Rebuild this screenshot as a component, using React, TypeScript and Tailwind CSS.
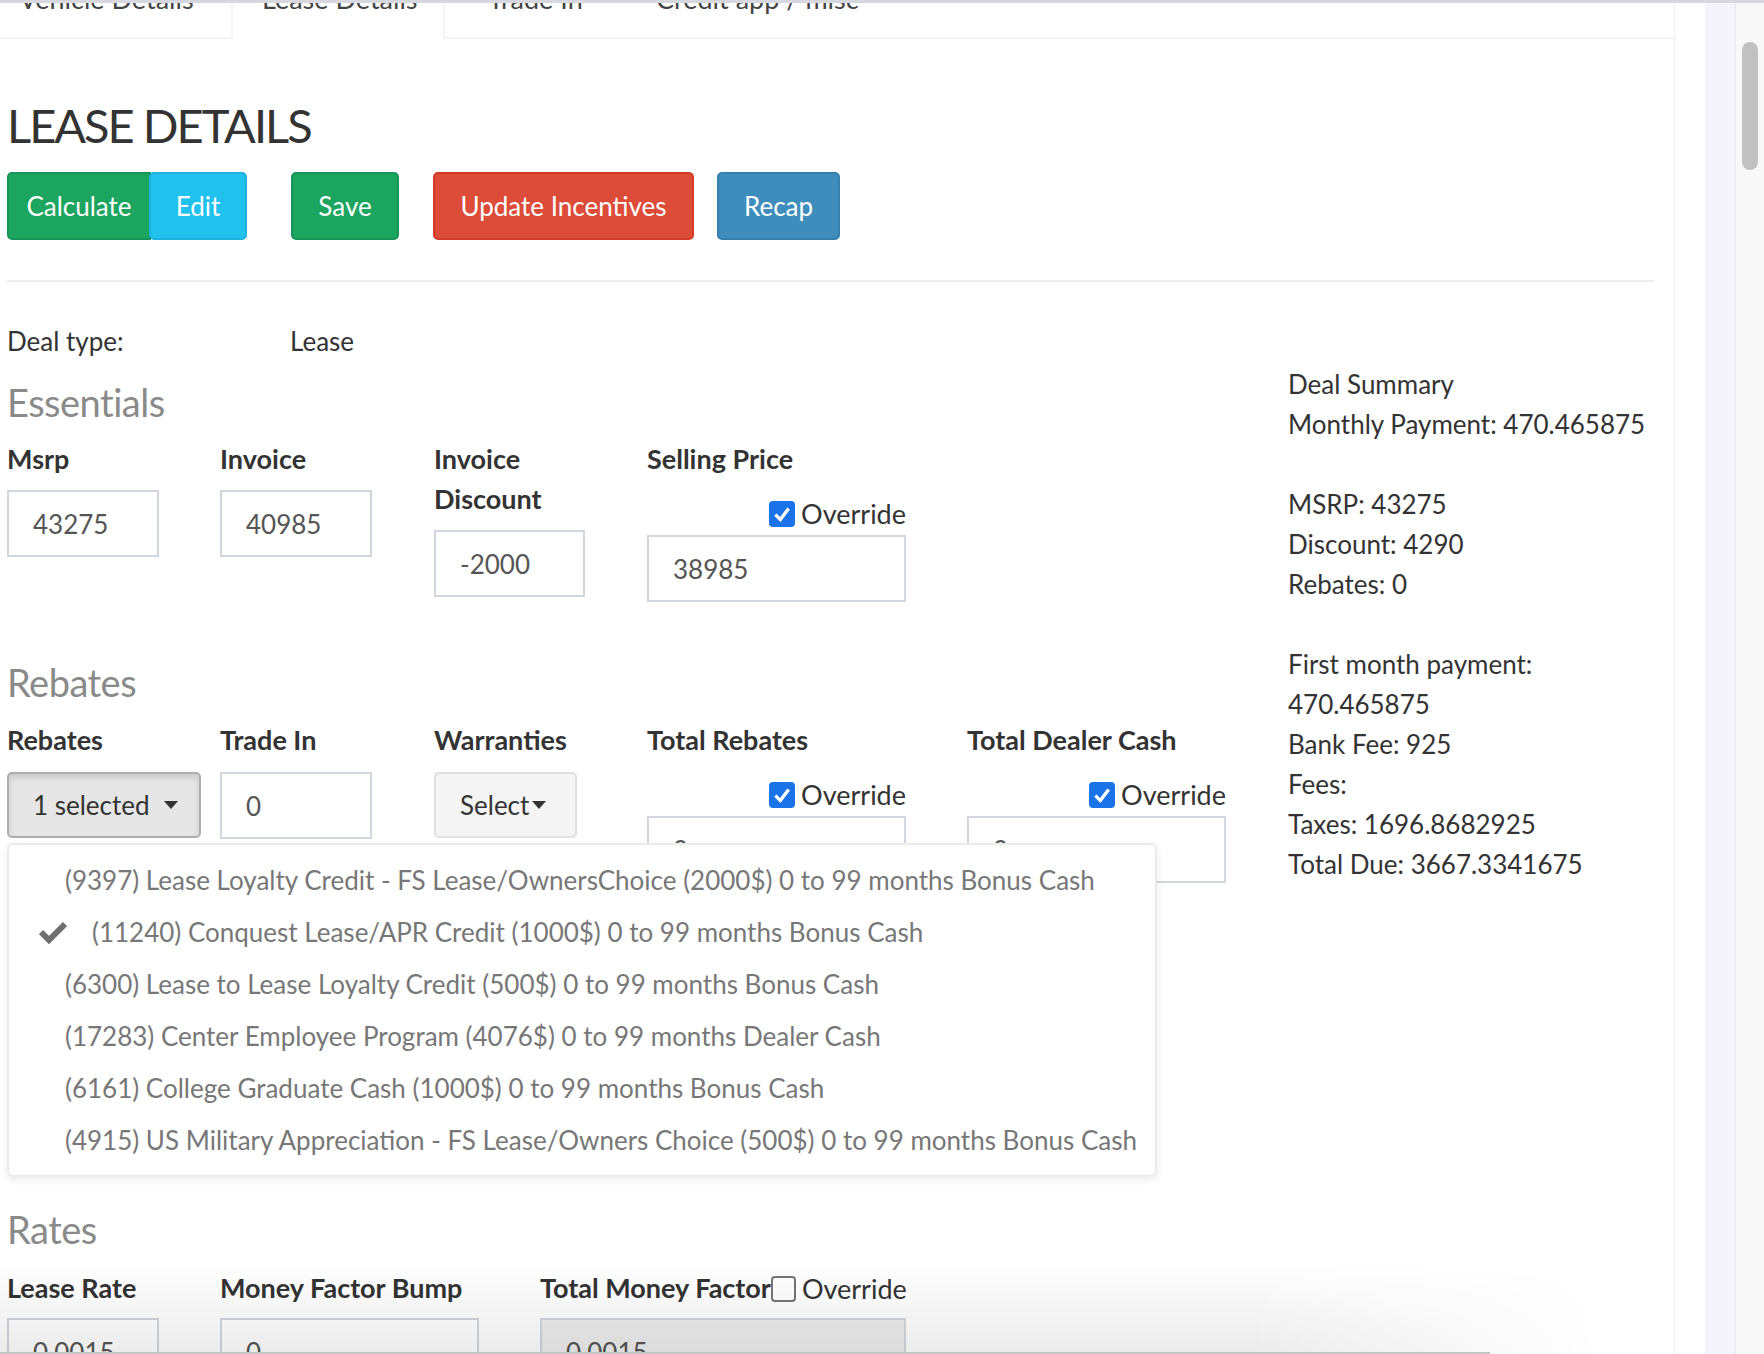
import React from 'react';

const REBATES = [
  { text: '(9397) Lease Loyalty Credit - FS Lease/OwnersChoice (2000$) 0 to 99 months Bonus Cash', checked: false },
  { text: '(11240) Conquest Lease/APR Credit (1000$) 0 to 99 months Bonus Cash', checked: true },
  { text: '(6300) Lease to Lease Loyalty Credit (500$) 0 to 99 months Bonus Cash', checked: false },
  { text: '(17283) Center Employee Program (4076$) 0 to 99 months Dealer Cash', checked: false },
  { text: '(6161) College Graduate Cash (1000$) 0 to 99 months Bonus Cash', checked: false },
  { text: '(4915) US Military Appreciation - FS Lease/Owners Choice (500$) 0 to 99 months Bonus Cash', checked: false },
];

function Caret() {
  return <span className="inline-block w-0 h-0 border-x-[7px] border-t-[8px] border-x-transparent border-t-[#333]" />;
}

function Checkbox({ checked }: { checked: boolean }) {
  if (!checked) {
    return <span className="inline-block w-[25px] h-[26px] rounded-[4px] border-2 border-[#767676] bg-white" />;
  }
  return (
    <span className="inline-flex w-[26px] h-[26px] rounded-[4px] bg-[#1a73e8] items-center justify-center">
      <svg width="20" height="20" viewBox="0 0 18 18">
        <polyline points="3,9.5 7.5,14 15,4" fill="none" stroke="white" strokeWidth="3" />
      </svg>
    </span>
  );
}

function Override({ checked }: { checked: boolean }) {
  return (
    <span className="inline-flex items-center gap-[6px] text-[#333] font-normal text-[27px] whitespace-nowrap">
      <Checkbox checked={checked} />
      Override
    </span>
  );
}

function TextInput({ value, width, disabled }: { value: string; width: string; disabled?: boolean }) {
  return (
    <div
      className={`${width} h-[67px] border-2 border-[#d2d6de] pl-[24px] flex items-center text-[#555] ${
        disabled ? 'bg-[#eeeeee]' : 'bg-white'
      }`}
    >
      {value}
    </div>
  );
}

function Label({ children }: { children: React.ReactNode }) {
  return <div className="font-bold text-[27px] text-[#333] leading-[40px] whitespace-nowrap">{children}</div>;
}

export default function App() {
  return (
    <div className="relative flex w-[1764px] h-[1354px] overflow-hidden bg-white font-['Lato','Liberation_Sans',sans-serif] text-[26px] leading-[40px] text-[#333]">
      <div className="absolute top-0 left-0 right-0 h-[3px] bg-[#d7d7df] z-10" />

      <main className="w-[1674px] shrink-0">
        {/* Tabs, scrolled partly out of view */}
        <div className="flex h-[39px] text-[#444] text-[27px]">
          <div className="w-[231px] border-b-2 border-[#f4f4f4] pl-[19px] overflow-hidden">
            <div className="-mt-[21px]">Vehicle Details</div>
          </div>
          <div className="w-[214px] border-x-2 border-[#f4f4f4] pl-[29px] overflow-hidden">
            <div className="-mt-[21px]">Lease Details</div>
          </div>
          <div className="w-[211px] border-b-2 border-[#f4f4f4] pl-[43px] overflow-hidden">
            <div className="-mt-[21px]">Trade In</div>
          </div>
          <div className="flex-1 border-b-2 border-[#f4f4f4] overflow-hidden">
            <div className="-mt-[21px]">Credit app / misc</div>
          </div>
        </div>

        <div className="pl-[7px] pr-[20px]">
          <h1 className="mt-[63px] text-[47px] leading-[47px] tracking-[-2px] font-normal text-[#333]">LEASE DETAILS</h1>

          <div className="mt-[23px] flex items-center h-[68px] text-white">
            <div className="flex">
              <button className="w-[144px] h-[68px] rounded-l-[5px] bg-[#1ba55e] border-2 border-[#17945a]">Calculate</button>
              <button className="w-[98px] h-[68px] rounded-[5px] bg-[#21c1ee] border-2 border-[#1db3dd] -ml-[2px]">Edit</button>
            </div>
            <button className="ml-[44px] w-[108px] h-[68px] rounded-[5px] bg-[#1ba55e] border-2 border-[#17945a]">Save</button>
            <button className="ml-[34px] w-[261px] h-[68px] rounded-[5px] bg-[#dd4b39] border-2 border-[#d33a28]">Update Incentives</button>
            <button className="ml-[23px] w-[123px] h-[68px] rounded-[5px] bg-[#3e8dbc] border-2 border-[#3680ab]">Recap</button>
          </div>

          <div className="mt-[40px] h-[2px] bg-[#eeeeee]" />

          <div className="flex">
            {/* Form column */}
            <div className="w-[1281px] shrink-0">
              <div className="mt-[39px] flex">
                <div className="w-[283px]">Deal type:</div>
                <div>Lease</div>
              </div>

              <h4 className="mt-[17px] text-[38px] leading-[48px] tracking-[-0.5px] text-[#8a8a8a]">Essentials</h4>

              <div className="mt-[13px] flex">
                <div className="w-[213px]">
                  <Label>Msrp</Label>
                  <div className="mt-[11px]"><TextInput value="43275" width="w-[152px]" /></div>
                </div>
                <div className="w-[214px]">
                  <Label>Invoice</Label>
                  <div className="mt-[11px]"><TextInput value="40985" width="w-[152px]" /></div>
                </div>
                <div className="w-[213px]">
                  <Label>Invoice<br />Discount</Label>
                  <div className="mt-[11px]"><TextInput value="-2000" width="w-[151px]" /></div>
                </div>
                <div className="w-[259px]">
                  <Label>Selling Price</Label>
                  <div className="h-[56px] pt-[14px] flex items-center justify-end"><Override checked /></div>
                  <TextInput value="38985" width="w-[259px]" />
                </div>
              </div>

              <h4 className="mt-[56px] text-[38px] leading-[48px] tracking-[-0.5px] text-[#8a8a8a]">Rebates</h4>

              <div className="mt-[14px] flex">
                <div className="relative w-[213px]">
                  <Label>Rebates</Label>
                  <div className="mt-[12px] w-[194px] h-[66px] rounded-[5px] border-2 border-[#adadad] bg-[#e6e6e6] shadow-[inset_0_4px_6px_rgba(0,0,0,0.12)] flex items-center pl-[24px] gap-[14px]">
                    <span>1 selected</span>
                    <Caret />
                  </div>

                  {/* Open multiselect menu */}
                  <div className="absolute left-0 top-[123px] z-20 w-[1150px] rounded-[6px] border-2 border-[#ebebeb] bg-white pt-[9px] pb-[9px] shadow-[0_3px_8px_rgba(0,0,0,0.08)] text-[#777]">
                    {REBATES.map(r => (
                      <div key={r.text} className="h-[52px] flex items-center whitespace-nowrap">
                        {r.checked ? (
                          <>
                            <svg className="ml-[30px] mr-[25px]" width="28" height="24" viewBox="0 0 28 24">
                              <polyline points="2,12 10,20 26,4" fill="none" stroke="#6f6f6f" strokeWidth="6" />
                            </svg>
                            <span>{r.text}</span>
                          </>
                        ) : (
                          <span className="ml-[56px]">{r.text}</span>
                        )}
                      </div>
                    ))}
                  </div>
                </div>
                <div className="w-[214px]">
                  <Label>Trade In</Label>
                  <div className="mt-[12px]"><TextInput value="0" width="w-[152px]" /></div>
                </div>
                <div className="w-[213px]">
                  <Label>Warranties</Label>
                  <div className="mt-[12px] w-[143px] h-[66px] rounded-[5px] border-2 border-[#e0e0e0] bg-[#f4f4f4] flex items-center pl-[24px] gap-[3px]">
                    <span>Select</span>
                    <Caret />
                  </div>
                </div>
                <div className="w-[320px]">
                  <Label>Total Rebates</Label>
                  <div className="w-[259px] h-[56px] pt-[14px] flex items-center justify-end"><Override checked /></div>
                  <TextInput value="0" width="w-[259px]" />
                </div>
                <div className="w-[259px]">
                  <Label>Total Dealer Cash</Label>
                  <div className="h-[56px] pt-[14px] flex items-center justify-end"><Override checked /></div>
                  <TextInput value="0" width="w-[259px]" />
                </div>
              </div>

              <h4 className="mt-[322px] text-[38px] leading-[48px] tracking-[-0.5px] text-[#8a8a8a]">Rates</h4>

              <div className="mt-[15px] flex">
                <div className="w-[213px]">
                  <Label>Lease Rate</Label>
                  <div className="mt-[10px]"><TextInput value="0.0015" width="w-[152px]" /></div>
                </div>
                <div className="w-[320px]">
                  <Label>Money Factor Bump</Label>
                  <div className="mt-[10px]"><TextInput value="0" width="w-[259px]" /></div>
                </div>
                <div className="w-[366px]">
                  <div className="flex items-center h-[40px]">
                    <Label>Total Money Factor</Label>
                    <span className="ml-auto relative top-[2px]"><Override checked={false} /></span>
                  </div>
                  <div className="mt-[10px]"><TextInput value="0.0015" width="w-[366px]" disabled /></div>
                </div>
              </div>
            </div>

            {/* Deal summary */}
            <div className="pt-[82px] w-[366px] whitespace-nowrap">
              <div>Deal Summary</div>
              <div>Monthly Payment: 470.465875</div>
              <div className="h-[40px]" />
              <div>MSRP: 43275</div>
              <div>Discount: 4290</div>
              <div>Rebates: 0</div>
              <div className="h-[40px]" />
              <div>First month payment:</div>
              <div>470.465875</div>
              <div>Bank Fee: 925</div>
              <div>Fees:</div>
              <div>Taxes: 1696.8682925</div>
              <div>Total Due: 3667.3341675</div>
            </div>
          </div>
        </div>
      </main>

      <div className="w-[31px] shrink-0 border-l border-[#f1f1f1] bg-white" />
      <div className="w-[30px] shrink-0 bg-[#f5f4fd]" />
      <div className="w-[29px] shrink-0 border-l border-[#e6e6e6] bg-[#f8f8f8] pt-[42px] flex justify-center">
        <div className="w-[16px] h-[128px] rounded-full bg-[#c1c1c1]" />
      </div>

      {/* Window shadow along the bottom edge */}
      <div className="absolute left-0 bottom-0 w-[1600px] h-[90px] z-30 bg-[linear-gradient(to_bottom,rgba(0,0,0,0),rgba(0,0,0,0.08))] [mask-image:linear-gradient(to_right,black_78%,transparent)]" />
      <div className="absolute left-0 bottom-0 w-[1490px] h-[2px] z-30 bg-[#c4c4c4]" />
    </div>
  );
}
